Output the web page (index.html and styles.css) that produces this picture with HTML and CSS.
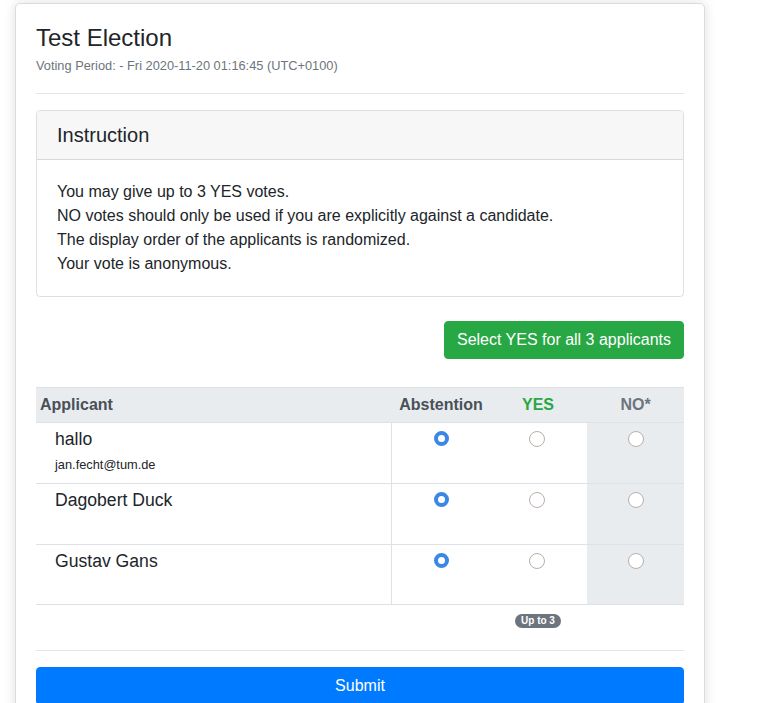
FILE: index.html
```html
<!DOCTYPE html>
<html lang="en">
<head>
<meta charset="utf-8">
<title>Test Election</title>
<link rel="stylesheet" href="styles.css">
</head>
<body>
<div class="page">
  <div class="card">
    <h4 class="card-title">Test Election</h4>
    <div class="card-subtitle">Voting Period: - Fri 2020-11-20 01:16:45 (UTC+0100)</div>
    <hr class="sep sep-top">

    <div class="inner-card">
      <div class="inner-header">Instruction</div>
      <div class="inner-body">
        <div>You may give up to 3 YES votes.</div>
        <div>NO votes should only be used if you are explicitly against a candidate.</div>
        <div>The display order of the applicants is randomized.</div>
        <div>Your vote is anonymous.</div>
      </div>
    </div>

    <div class="actions">
      <button class="btn btn-success" type="button">Select YES for all 3 applicants</button>
    </div>

    <table class="vote-table">
      <colgroup>
        <col class="col-name">
        <col class="col-abs">
        <col class="col-yes">
        <col class="col-no">
      </colgroup>
      <thead>
        <tr>
          <th class="th-name">Applicant</th>
          <th class="th-abs">Abstention</th>
          <th class="th-yes">YES</th>
          <th class="th-no">NO*</th>
        </tr>
      </thead>
      <tbody>
        <tr>
          <td class="td-name"><div class="name">hallo</div><div class="email">jan.fecht@tum.de</div></td>
          <td class="td-abs"><input class="radio" type="radio" name="a1" checked></td>
          <td class="td-yes"><input class="radio" type="radio" name="a1"></td>
          <td class="td-no"><input class="radio" type="radio" name="a1"></td>
        </tr>
        <tr>
          <td class="td-name"><div class="name">Dagobert Duck</div></td>
          <td class="td-abs"><input class="radio" type="radio" name="a2" checked></td>
          <td class="td-yes"><input class="radio" type="radio" name="a2"></td>
          <td class="td-no"><input class="radio" type="radio" name="a2"></td>
        </tr>
        <tr class="last-row">
          <td class="td-name"><div class="name">Gustav Gans</div></td>
          <td class="td-abs"><input class="radio" type="radio" name="a3" checked></td>
          <td class="td-yes"><input class="radio" type="radio" name="a3"></td>
          <td class="td-no"><input class="radio" type="radio" name="a3"></td>
        </tr>
      </tbody>
      <tfoot>
        <tr>
          <td></td>
          <td></td>
          <td class="foot-yes"><span class="badge">Up to 3</span></td>
          <td></td>
        </tr>
      </tfoot>
    </table>

    <hr class="sep sep-bottom">
    <button class="btn btn-primary btn-block" type="submit">Submit</button>
  </div>
</div>
</body>
</html>
```

FILE: styles.css
```css
html, body {
  margin: 0;
  padding: 0;
  background: #fff;
}

body {
  font-family: "Liberation Sans", Arial, sans-serif;
  font-size: 16px;
  line-height: 1.5;
  color: #212529;
  overflow: hidden;
}

.page {
  padding: 3px 0 0 15px;
}

.card {
  width: 690px;
  box-sizing: border-box;
  background: #fff;
  border: 1px solid #dcdcdc;
  border-radius: 5px;
  box-shadow: 0 0 12px rgba(0, 0, 0, 0.13);
  padding: 20px;
}

.card-title {
  margin: 0 0 3px;
  font-size: 24px;
  font-weight: 400;
  line-height: 1.2;
}

.card-subtitle {
  font-size: 12.8px;
  line-height: 19.2px;
  color: #6c757d;
}

.sep {
  border: 0;
  border-top: 1px solid rgba(0, 0, 0, 0.1);
  height: 0;
}

.sep-top {
  margin: 18px 0 16px;
}

.sep-bottom {
  margin: 12px 0 16px;
}

.inner-card {
  border: 1px solid rgba(0, 0, 0, 0.125);
  border-radius: 4px;
  overflow: hidden;
}

.inner-header {
  padding: 12px 20px;
  background: #f7f7f7;
  border-bottom: 1px solid rgba(0, 0, 0, 0.125);
  font-size: 20px;
  line-height: 24px;
}

.inner-body {
  padding: 20px;
  line-height: 24px;
}

.actions {
  display: flex;
  justify-content: flex-end;
  margin-top: 24px;
  margin-bottom: 28px;
}

.btn {
  font-family: inherit;
  font-size: 16px;
  line-height: 24px;
  padding: 6px 12px;
  border: 1px solid transparent;
  border-radius: 4px;
  color: #fff;
  cursor: pointer;
}

.btn-success {
  background: #28a745;
  border-color: #28a745;
}

.btn-primary {
  background: #007bff;
  border-color: #007bff;
}

.btn-block {
  display: block;
  width: 100%;
}

.vote-table {
  width: 648px;
  table-layout: fixed;
  border-collapse: collapse;
}

.col-name { width: 355px; }
.col-abs { width: 98px; }
.col-yes { width: 98px; }
.col-no { width: 97px; }

.vote-table thead th {
  background: #e9ecef;
  color: #495057;
  font-weight: 700;
  line-height: 24px;
  padding: 5px 4px;
  border-top: 1px solid #dee2e6;
  border-bottom: 1px solid #dee2e6;
}

.th-name { text-align: left; }
.th-abs, .th-yes, .th-no { text-align: center; }
.vote-table thead .th-abs { padding-left: 6px; }
.vote-table thead .th-yes { color: #28a745; }
.vote-table thead .th-no { color: #6c757d; }

.vote-table tbody td {
  height: 61px;
  box-sizing: border-box;
  vertical-align: top;
  border-bottom: 1px solid #dee2e6;
  padding: 0;
}

.vote-table tbody .last-row td {
  height: 60px;
}

.vote-table tbody .td-name {
  padding: 3px 5px 0 19px;
}

.name {
  font-size: 17.6px;
  line-height: 26px;
}

.email {
  font-size: 12.8px;
  line-height: 19px;
  margin-top: 3px;
}

.vote-table tbody .td-abs {
  border-left: 1px solid #dee2e6;
  text-align: center;
  padding: 8px 0 0 2px;
}

.vote-table tbody .td-yes {
  text-align: center;
  padding: 8px 2px 0 0;
}

.vote-table tbody .td-no {
  text-align: center;
  background: #e9ecef;
  padding: 8px 0 0;
}

.radio {
  -webkit-appearance: none;
  appearance: none;
  display: block;
  margin: 0 auto;
  width: 16px;
  height: 16px;
  box-sizing: border-box;
  border-radius: 50%;
  border: 1px solid #b8b0aa;
  background: #fff;
}

.radio:checked {
  width: 15px;
  height: 15px;
  border: 4px solid #3b87e6;
  background: #fff;
}

.vote-table tfoot td {
  padding: 9px 0 0;
  border: 0;
}

.foot-yes {
  text-align: center;
}

.badge {
  display: inline-block;
  background: #6c757d;
  color: #fff;
  font-size: 10px;
  font-weight: 700;
  line-height: 10px;
  padding: 2px 6px;
  border-radius: 10rem;
  vertical-align: top;
}
```
